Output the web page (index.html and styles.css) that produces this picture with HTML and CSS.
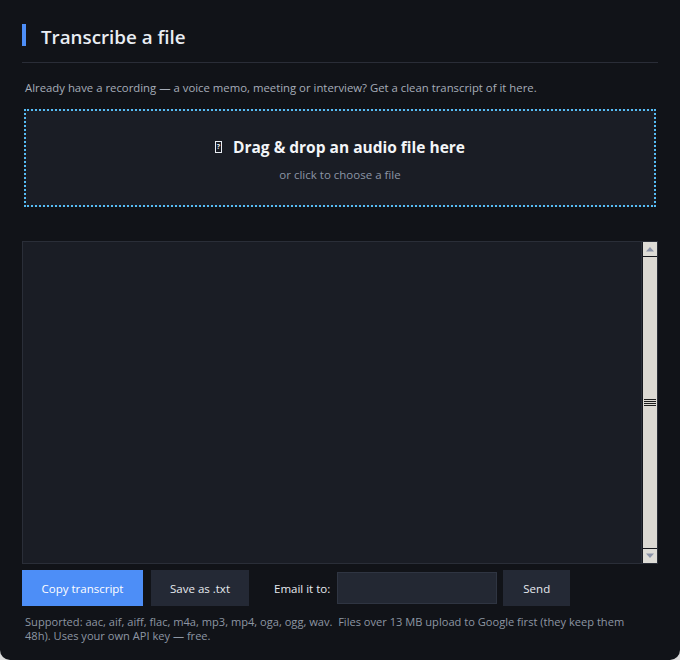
FILE: index.html
```html
<!DOCTYPE html>
<html lang="en">
<head>
<meta charset="utf-8">
<title>Transcribe a file</title>
<link rel="stylesheet" href="styles.css">
</head>
<body>
<div class="card">
  <header class="head">
    <span class="accent"></span>
    <h1 class="title">Transcribe a file</h1>
  </header>
  <p class="desc">Already have a recording — a voice memo, meeting or interview? Get a clean transcript of it here.</p>
  <div class="drop">
    <div class="drop-title"><span class="tofu">?</span>Drag &amp; drop an audio file here</div>
    <div class="drop-sub">or click to choose a file</div>
  </div>
  <div class="output">
    <textarea class="text" aria-label="Transcript"></textarea>
    <div class="sbar">
      <div class="sbtn"><svg width="14" height="14" viewBox="0 0 14 14"><path d="M3 9.5 L7 5 L11 9.5 Z" fill="#8c94a8"/></svg></div>
      <div class="thumb"><span class="grip"></span></div>
      <div class="sbtn"><svg width="14" height="14" viewBox="0 0 14 14"><path d="M3 4.5 L7 9 L11 4.5 Z" fill="#8c94a8"/></svg></div>
    </div>
  </div>
  <div class="actions">
    <button class="btn primary">Copy transcript</button>
    <button class="btn save">Save as .txt</button>
    <label class="email-label" for="em">Email it to:</label>
    <input id="em" class="email" type="email">
    <button class="btn send">Send</button>
  </div>
  <p class="note">Supported: aac, aif, aiff, flac, m4a, mp3, mp4, oga, ogg, wav.&nbsp; Files over 13 MB upload to Google first (they keep them 48h). Uses your own API key — free.</p>
</div>
</body>
</html>
```

FILE: styles.css
```css
* { box-sizing: border-box; }
html, body { margin: 0; padding: 0; }
body {
  background: #dcdcdc;
  font-family: "Open Sans", "Noto Sans", sans-serif;
}
.card {
  width: 680px;
  height: 660px;
  background: #111318;
  border-radius: 0 0 10px 10px;
  padding: 24px 22px 0 22px;
}
.head {
  display: flex;
  align-items: center;
  padding-bottom: 16px;
  border-bottom: 1px solid #2a2d37;
}
.accent {
  width: 4px;
  height: 22px;
  background: #4d8ef7;
  margin-right: 15px;
}
.title {
  margin: 0;
  padding-top: 2px;
  height: 22px;
  font-size: 18.8px;
  line-height: 22px;
  font-weight: 600;
  color: #e9edf3;
}
.desc {
  margin: 17px 0 13px 3px;
  font-size: 11.35px;
  line-height: 16px;
  color: #a6adb8;
}
.drop {
  margin: 0 2px;
  height: 98px;
  border: 2px dotted #56bdf5;
  background: #1a1d25;
  padding: 25px 0 0 0;
  text-align: center;
}
.drop-title {
  font-size: 15.5px;
  line-height: 22px;
  font-weight: 700;
  color: #f3f5f8;
  display: flex;
  justify-content: center;
  align-items: center;
}
.tofu {
  display: inline-block;
  width: 7px;
  height: 12px;
  border: 1px solid #e9edf3;
  font-size: 7px;
  line-height: 10px;
  text-align: center;
  font-weight: 700;
  margin-right: 11px;
  color: #e9edf3;
  overflow: hidden;
}
.drop-sub {
  margin-top: 9px;
  font-size: 11.5px;
  line-height: 16px;
  color: #8c95a5;
}
.output {
  margin-top: 34px;
  height: 323px;
  display: flex;
  border: 1px solid #2a2e38;
  background: #1a1d25;
}
.text {
  flex: 1;
  border: 0;
  background: transparent;
  resize: none;
  outline: none;
  color: #e6e9ef;
  font-family: inherit;
}
.sbar {
  width: 16px;
  display: flex;
  flex-direction: column;
  gap: 1px;
  border-left: 1px solid #2a2e38;
  padding-left: 1px;
  background: #15171d;
}
.sbtn {
  height: 14px;
  background: #dedcd6;
  display: flex;
}
.thumb {
  flex: 1;
  background: #dcd9d3;
  display: flex;
  align-items: center;
  justify-content: center;
}
.grip {
  width: 12px;
  height: 8px;
  background: repeating-linear-gradient(to bottom, #1c1c1c 0 1px, #dcd9d3 1px 2px);
}
.actions {
  margin-top: 6px;
  display: flex;
  align-items: center;
}
.btn {
  height: 36px;
  border: 0;
  padding: 0;
  font-family: inherit;
  font-size: 11.5px;
  color: #e6e9ef;
  background: #242935;
}
.primary {
  width: 121px;
  background: #4d8ef7;
  color: #ffffff;
}
.save {
  width: 98px;
  margin-left: 8px;
}
.email-label {
  margin-left: 25px;
  font-size: 11.5px;
  color: #e6e9ef;
}
.email {
  margin-left: 7px;
  width: 160px;
  height: 32px;
  background: #232833;
  border: 1px solid #2f3542;
  color: #e6e9ef;
}
.send {
  width: 67px;
  margin-left: 6px;
}
.note {
  margin: 9px 0 0 3px;
  padding-right: 14px;
  font-size: 11.1px;
  line-height: 14px;
  color: #8d96a3;
}
```
